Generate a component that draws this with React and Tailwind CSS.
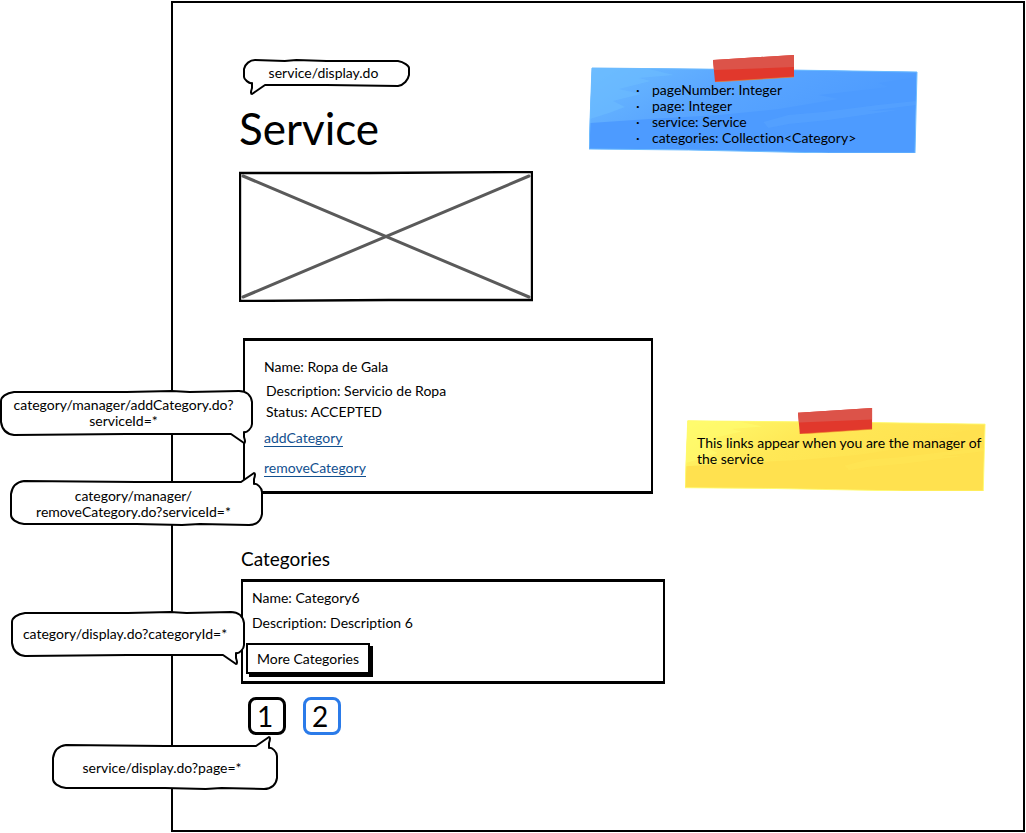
import React from "react";

function Bubble({ width, height, tail }) {
  const r = height > 30 ? 14 : 12;
  const w = width;
  const h = height;
  const outline = [
    `M${r} 2`,
    `C6 3 1 7 1 ${r - 3}`,
    `L1 ${h - r + 1}`,
    `C2 ${h - 6} 6 ${h - 1} ${r} ${h}`,
    `L${w / 2} ${h - 1}`,
    `L${w - 22} ${h - 1}`,
    `L${w - 9} ${h + 8}`,
    `Q${w - 7} ${h + 8} ${w - 9} ${h + 2}`,
    `L${w - 9} ${h - 3}`,
    `C${w - 6} ${h - 2} ${w - 1} ${h - 7} ${w - 1} ${h - r + 3}`,
    `L${w - 1} ${r - 2}`,
    `C${w - 2} 5 ${w - 7} 1 ${w - r} 1`,
    `L${w * 0.75} 2`,
    `L${w * 0.68} 1`,
    `L${w * 0.5} 2`,
    "Z",
  ].join(" ");
  const flips = {
    "bottom-right": "",
    "top-right": `translate(0 ${h}) scale(1 -1)`,
    "bottom-left": `translate(${w} 0) scale(-1 1)`,
  };
  return (
    <svg
      className="absolute inset-0 overflow-visible"
      width={w}
      height={h}
      viewBox={`0 0 ${w} ${h}`}
      aria-hidden="true"
    >
      <path
        d={outline}
        transform={flips[tail]}
        fill="#fff"
        stroke="#000"
        strokeWidth="2"
        strokeLinejoin="round"
      />
    </svg>
  );
}

function Callout({ width, height = 45, tail = "bottom-right", className = "", children }) {
  return (
    <div className={`${className} z-10 text-center`} style={{ width, height }}>
      <Bubble width={width} height={height} tail={tail} />
      <p className="relative flex h-full items-center justify-center pr-1.5 leading-4">
        <span>{children}</span>
      </p>
    </div>
  );
}

function Note({ base, light, lighter, className, tapeClass, children }) {
  return (
    <aside className={`relative ${className}`}>
      <svg
        className="absolute inset-0 h-full w-full"
        viewBox="0 0 330 86"
        preserveAspectRatio="none"
        aria-hidden="true"
      >
        <defs>
          <linearGradient id={`fade-${base.slice(1)}`} x1="0" y1="0" x2="1" y2="0.3">
            <stop offset="0" stopColor={lighter} />
            <stop offset="0.45" stopColor={light} />
            <stop offset="1" stopColor={base} />
          </linearGradient>
        </defs>
        <path d="M3 1 L120 2 L200 3 L329 5 L328 40 L327 86 L240 86 L100 83 L0 82 L1 50 Z" fill={base} />
        <path
          d="M3 1 L200 3 L329 5 L328 10 L290 16 L300 20 L230 28 L250 32 L190 42 L130 48 L60 52 L1 56 Z"
          fill={`url(#fade-${base.slice(1)})`}
        />
        <path d="M3 1 L60 2 L85 8 L50 11 L62 14 L30 22 L52 27 L24 34 L36 40 L20 46 L1 52 Z" fill={lighter} opacity="0.6" />
        <path d="M175 55 L200 48 L235 45 L290 38 L328 34 L328 38 L280 44 L310 43 L240 53 L200 57 L180 61 Z" fill={light} opacity="0.5" />
        <path d="M3 1 L200 3 L329 5 L327 86 L240 86 L100 83 L0 82 Z" fill="none" stroke={lighter} strokeWidth="1" />
      </svg>
      <svg className={`absolute ${tapeClass}`} viewBox="0 0 82 27" preserveAspectRatio="none" aria-hidden="true">
        <path d="M0 5 L81 0 L81 22 L2 27 Z" fill="#e1382c" />
        <path d="M0 5 L81 0 L81 12 L1 15 Z" fill="#dc5349" />
        <path d="M2 27 L81 22" stroke="#f08a2c" strokeWidth="1" opacity="0.6" />
      </svg>
      <div className="relative leading-4">{children}</div>
    </aside>
  );
}

const modelFields = [
  "pageNumber: Integer",
  "page: Integer",
  "service: Service",
  "categories: Collection<Category>",
];

export default function App() {
  return (
    <div className="min-h-screen bg-white py-px pr-px pl-[171px] font-['Lato',sans-serif] text-[14px] leading-4 text-black [font-variant-ligatures:none]">
      <main className="min-h-[calc(100vh-2px)] border-2 border-black pt-14 pb-10 pl-[66px]">
        <section className="flex items-start">
          <div className="w-[350px] shrink-0">
            <Callout width={167} height={27} tail="bottom-left" className="relative ml-1">
              service/display.do
            </Callout>
            <h1 className="mt-[18px] text-[44px] leading-[48px]">Service</h1>
            <svg className="mt-[19px] block" width="294" height="131" viewBox="0 0 294 131" role="img" aria-label="Image">
              <path d="M4 5 L290 126 M4 126 L290 5" stroke="#5a5a5a" strokeWidth="3" strokeLinecap="round" />
              <path d="M1 2 L130 2 L293 1 L293 129 L150 129 L1 130 Z" fill="none" stroke="#000" strokeWidth="2.4" />
            </svg>
          </div>
          <Note
            base="#4d9bff"
            light="#5aa6ff"
            lighter="#6cbcff"
            className="mt-2 w-[329px] px-[47px] pt-[15px] pb-[7px]"
            tapeClass="-top-3 left-[124px] h-[27px] w-[82px]"
          >
            <ul>
              {modelFields.map((field) => (
                <li key={field} className="flex">
                  <span className="w-4 shrink-0">·</span>
                  {field}
                </li>
              ))}
            </ul>
          </Note>
        </section>

        <section className="mt-9 ml-1 flex items-start">
          <div className="relative w-[410px] shrink-0 border-x-2 border-y-3 border-black px-[19px] pt-[18px] pb-[15px]">
            <p>Name: Ropa de Gala</p>
            <p className="mt-2 ml-0.5">Description: Servicio de Ropa</p>
            <p className="mt-[5px] ml-0.5">Status: ACCEPTED</p>
            <p className="mt-2.5">
              <a href="#add" className="border-b border-[#12508f] text-[#12508f]">addCategory</a>
            </p>
            <p className="mt-3.5">
              <a href="#remove" className="border-b border-[#12508f] text-[#12508f]">removeCategory</a>
            </p>
            <Callout width={253} className="absolute -left-[245px] top-[49px]">
              category/manager/addCategory.do?
              <br />
              serviceId=*
            </Callout>
            <Callout width={253} tail="top-right" className="absolute -left-[235px] top-[140px]">
              category/manager/
              <br />
              removeCategory.do?serviceId=*
            </Callout>
          </div>
          <Note
            base="#ffe14f"
            light="#ffe856"
            lighter="#fffb6e"
            className="mt-[82px] ml-8 w-[301px] pt-[15px] pr-1 pb-6 pl-3"
            tapeClass="-top-3 left-[113px] h-[26px] w-[75px]"
          >
            <p>This links appear when you are the manager of the service</p>
          </Note>
        </section>

        <section className="mt-[53px]">
          <h2 className="ml-0.5 text-[19px] leading-6">Categories</h2>
          <div className="relative mt-2 ml-0.5 w-[424px] border-x-2 border-y-3 border-black pt-2 pb-[7px]">
            <p className="px-[9px]">Name: Category6</p>
            <p className="mt-[9px] px-[9px]">Description: Description 6</p>
            <button type="button" className="mt-3 ml-[3px] block h-[31px] w-[124px] border-2 border-black bg-white shadow-[3px_3px_0_#000]">
              More Categories
            </button>
            <Callout width={234} className="absolute -left-[232px] top-[29px]">
              category/display.do?categoryId=*
            </Callout>
          </div>
          <nav aria-label="Pages" className="relative mt-[13px] ml-[9px] flex gap-[17px] text-[28px]">
            <button type="button" className="size-[38px] rounded-lg border-3 border-black pr-1 leading-8">1</button>
            <button type="button" className="size-[38px] rounded-lg border-3 border-[#2b7be9] pr-1 leading-8">2</button>
            <div className="absolute top-12 -left-[196px] text-[14px]">
              <Callout width={226} tail="top-right" className="relative">
                service/display.do?page=*
              </Callout>
            </div>
          </nav>
        </section>
      </main>
    </div>
  );
}
